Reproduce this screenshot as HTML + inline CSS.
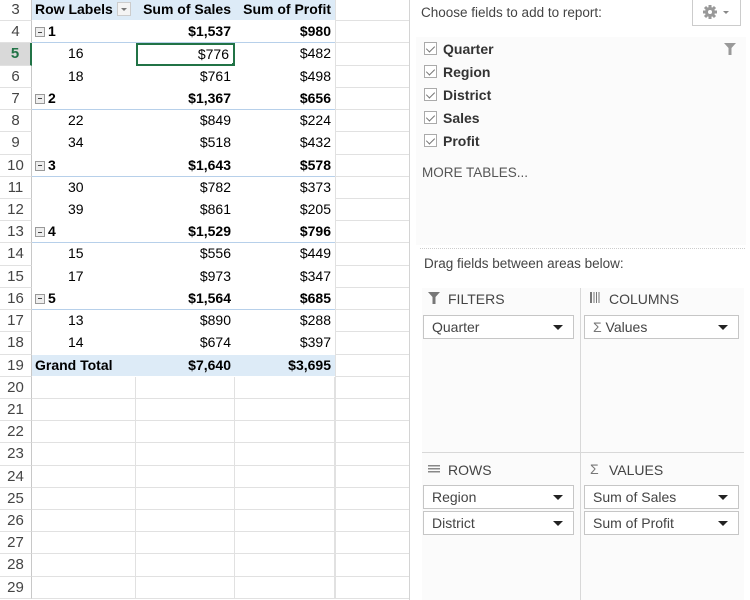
<!DOCTYPE html>
<html><head><style>
*{margin:0;padding:0;box-sizing:border-box}
body{width:750px;height:600px;overflow:hidden;background:#fff;font-family:"Liberation Sans",sans-serif;position:relative;color:#000}
#grid{position:absolute;left:0;top:-1px;width:410px}
.r{display:flex;height:22.23px;font-size:14px;line-height:21px}
.r>div{height:100%;overflow:hidden;white-space:nowrap}
.n{width:32px;text-align:center;color:#444;background:#fff;border-right:1px solid #c8c8c8;border-bottom:1px solid #e1e1e1;font-size:15px}
.a{width:104px;padding-left:3px}
.b{width:99px;text-align:right;padding-right:4px}
.c{width:100px;text-align:right;padding-right:4px}
.d{width:74px;border-bottom:1px solid #e1e1e1;border-left:1px solid #e1e1e1}
.h>div.a,.h>div.b,.h>div.c{background:#ddebf7;font-weight:bold;border-bottom:1px solid #fff}
.s>div.a,.s>div.b,.s>div.c{font-weight:bold;border-bottom:1px solid #b7d0ea}
.i .a{padding-left:36px}
.e>div.a,.e>div.b,.e>div.c{border-bottom:1px solid #e1e1e1;border-right:1px solid #e1e1e1}
.mi{display:inline-block;width:10px;height:10px;border:1px solid #999;background:#eee;vertical-align:-1px;margin-right:3px;position:relative}
.mi:after{content:"";position:absolute;left:2px;top:3.5px;width:4px;height:1px;background:#444}
.dd{display:inline-block;width:14px;height:14px;border:1px solid #ccc;background:#f4f4f4;vertical-align:-2px;margin-left:4px;position:relative}
.dd:after{content:"";position:absolute;left:3px;top:5px;border:3px solid transparent;border-top:3px solid #777}
#panel{position:absolute;left:409px;top:0;width:341px;height:600px;border-left:1px solid #d4d4d4;background:#fff;color:#444}
.t{position:absolute;font-size:13.5px}
.fl{position:absolute;left:6px;top:37px;width:330px;height:208px;background:#fbfbfb}
.cb{position:absolute;left:14px;width:13px;height:13px;border:1px solid #aaa;background:#fff}
.cb:after{content:"";position:absolute;left:3px;top:1px;width:4px;height:7px;border:solid #777;border-width:0 1.5px 1.5px 0;transform:rotate(45deg)}
.fn{position:absolute;left:33px;font-weight:bold;font-size:14px;color:#333}
.box{position:absolute;height:24px;border:1px solid #c6c6c6;background:#fff;font-size:14px;line-height:22px;padding-left:8px;color:#444}
.box:after{content:"";position:absolute;right:10px;top:9px;border:5px solid transparent;border-top:5px solid #222;border-bottom:0}
.ah{position:absolute;font-size:14px;color:#444}
</style></head><body>
<div id="grid">
<div class="r h"><div class="n">3</div><div class="a">Row Labels<span class="dd"></span></div><div class="b">Sum of Sales</div><div class="c">Sum of Profit</div><div class="d"></div></div>
<div class="r s"><div class="n">4</div><div class="a"><span class="mi"></span>1</div><div class="b">$1,537</div><div class="c">$980</div><div class="d"></div></div>
<div class="r i"><div class="n" style="background:#d9d9d9;color:#217346;font-weight:bold;border-right:2px solid #217346">5</div><div class="a">16</div><div class="b" style="border:2px solid #217346;position:relative;line-height:18px">$776<span style="position:absolute;right:-3px;bottom:-3px;width:5px;height:5px;background:#217346;border:1px solid #fff"></span></div><div class="c">$482</div><div class="d"></div></div>
<div class="r i"><div class="n">6</div><div class="a">18</div><div class="b">$761</div><div class="c">$498</div><div class="d"></div></div>
<div class="r s"><div class="n">7</div><div class="a"><span class="mi"></span>2</div><div class="b">$1,367</div><div class="c">$656</div><div class="d"></div></div>
<div class="r i"><div class="n">8</div><div class="a">22</div><div class="b">$849</div><div class="c">$224</div><div class="d"></div></div>
<div class="r i"><div class="n">9</div><div class="a">34</div><div class="b">$518</div><div class="c">$432</div><div class="d"></div></div>
<div class="r s"><div class="n">10</div><div class="a"><span class="mi"></span>3</div><div class="b">$1,643</div><div class="c">$578</div><div class="d"></div></div>
<div class="r i"><div class="n">11</div><div class="a">30</div><div class="b">$782</div><div class="c">$373</div><div class="d"></div></div>
<div class="r i"><div class="n">12</div><div class="a">39</div><div class="b">$861</div><div class="c">$205</div><div class="d"></div></div>
<div class="r s"><div class="n">13</div><div class="a"><span class="mi"></span>4</div><div class="b">$1,529</div><div class="c">$796</div><div class="d"></div></div>
<div class="r i"><div class="n">14</div><div class="a">15</div><div class="b">$556</div><div class="c">$449</div><div class="d"></div></div>
<div class="r i"><div class="n">15</div><div class="a">17</div><div class="b">$973</div><div class="c">$347</div><div class="d"></div></div>
<div class="r s"><div class="n">16</div><div class="a"><span class="mi"></span>5</div><div class="b">$1,564</div><div class="c">$685</div><div class="d"></div></div>
<div class="r i"><div class="n">17</div><div class="a">13</div><div class="b">$890</div><div class="c">$288</div><div class="d"></div></div>
<div class="r i"><div class="n">18</div><div class="a">14</div><div class="b">$674</div><div class="c">$397</div><div class="d"></div></div>
<div class="r h"><div class="n">19</div><div class="a">Grand Total</div><div class="b">$7,640</div><div class="c">$3,695</div><div class="d"></div></div>
<div class="r e"><div class="n">20</div><div class="a"></div><div class="b"></div><div class="c"></div><div class="d"></div></div>
<div class="r e"><div class="n">21</div><div class="a"></div><div class="b"></div><div class="c"></div><div class="d"></div></div>
<div class="r e"><div class="n">22</div><div class="a"></div><div class="b"></div><div class="c"></div><div class="d"></div></div>
<div class="r e"><div class="n">23</div><div class="a"></div><div class="b"></div><div class="c"></div><div class="d"></div></div>
<div class="r e"><div class="n">24</div><div class="a"></div><div class="b"></div><div class="c"></div><div class="d"></div></div>
<div class="r e"><div class="n">25</div><div class="a"></div><div class="b"></div><div class="c"></div><div class="d"></div></div>
<div class="r e"><div class="n">26</div><div class="a"></div><div class="b"></div><div class="c"></div><div class="d"></div></div>
<div class="r e"><div class="n">27</div><div class="a"></div><div class="b"></div><div class="c"></div><div class="d"></div></div>
<div class="r e"><div class="n">28</div><div class="a"></div><div class="b"></div><div class="c"></div><div class="d"></div></div>
<div class="r e"><div class="n">29</div><div class="a"></div><div class="b"></div><div class="c"></div><div class="d"></div></div>
</div>

<div id="panel">
<div class="t" style="left:11px;top:5px">Choose fields to add to report:</div>
<div style="position:absolute;left:282px;top:-1px;width:49px;height:27px;border:1px solid #ccc;background:#fff">
<svg width="49" height="27" style="position:absolute;left:0;top:0"><g fill="#999"><circle cx="17" cy="12" r="5"/><g stroke="#999" stroke-width="3"><line x1="17" y1="5" x2="17" y2="19"/><line x1="10" y1="12" x2="24" y2="12"/><line x1="12" y1="7" x2="22" y2="17"/><line x1="22" y1="7" x2="12" y2="17"/></g><circle cx="17" cy="12" r="2" fill="#fff"/><path d="M30 11h6l-3 3z" fill="#888"/></g></svg></div>
<div class="fl"></div>
<svg style="position:absolute;left:313px;top:42px" width="14" height="14"><path d="M1 1h12l-4.5 5v7h-3v-7z" fill="#999"/></svg>
<div class="cb" style="top:42px"></div><div class="fn" style="top:41px">Quarter</div>
<div class="cb" style="top:65px"></div><div class="fn" style="top:64px">Region</div>
<div class="cb" style="top:88px"></div><div class="fn" style="top:87px">District</div>
<div class="cb" style="top:111px"></div><div class="fn" style="top:110px">Sales</div>
<div class="cb" style="top:134px"></div><div class="fn" style="top:133px">Profit</div>
<div class="t" style="left:12px;top:165px;color:#555">MORE TABLES...</div>
<div style="position:absolute;left:10px;top:248px;width:325px;border-top:1px dotted #ccc"></div>
<div class="t" style="left:14px;top:256px">Drag fields between areas below:</div>
<div style="position:absolute;left:12px;top:288px;width:322px;height:312px;background:#fbfbfb"></div>
<div style="position:absolute;left:170px;top:288px;width:1px;height:312px;background:#d8d8d8"></div>
<div style="position:absolute;left:12px;top:452px;width:322px;height:1px;background:#d8d8d8"></div>
<svg style="position:absolute;left:18px;top:292px" width="12" height="12"><path d="M0 0h12l-4.5 5v7h-3v-7z" fill="#777"/></svg>
<div class="ah" style="left:38px;top:291px">FILTERS</div>
<svg style="position:absolute;left:180px;top:292px" width="12" height="12"><g fill="#777"><rect x="0" y="0" width="2" height="11"/><rect x="3.5" y="0" width="1" height="11"/><rect x="6" y="0" width="1" height="11"/><rect x="8.5" y="0" width="1" height="11"/></g></svg>
<div class="ah" style="left:199px;top:291px">COLUMNS</div>
<svg style="position:absolute;left:18px;top:465px" width="12" height="10"><g fill="#888"><rect y="0" width="12" height="1.5"/><rect y="3" width="12" height="1.5"/><rect y="6" width="12" height="1.5"/></g></svg>
<div class="ah" style="left:38px;top:462px">ROWS</div>
<div class="ah" style="left:180px;top:461px;color:#777">Σ</div>
<div class="ah" style="left:199px;top:462px">VALUES</div>
<div class="box" style="left:13px;top:315px;width:151px">Quarter</div>
<div class="box" style="left:174px;top:315px;width:155px"><span style="color:#777">Σ</span> Values</div>
<div class="box" style="left:13px;top:485px;width:151px">Region</div>
<div class="box" style="left:13px;top:511px;width:151px">District</div>
<div class="box" style="left:174px;top:485px;width:155px">Sum of Sales</div>
<div class="box" style="left:174px;top:511px;width:155px">Sum of Profit</div>
</div>
</body></html>
